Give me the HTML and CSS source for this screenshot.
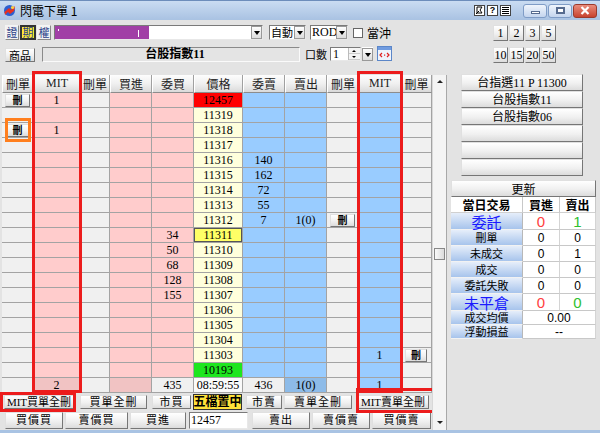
FILE: index.html
```html
<!DOCTYPE html>
<html>
<head>
<meta charset="utf-8">
<title>閃電下單 1</title>
<link rel="stylesheet" href="styles.css">
</head>
<body>
<div class="win">
  <div class="title">
    <svg class="appicon" width="13" height="13" viewBox="0 0 13 13"><circle cx="6.5" cy="6.5" r="5.5" fill="#2d5fd0"/><path d="M1.5 8 L6 4 L8 6 L12 2 L11 7 L7 10 L5 8 L2 11 Z" fill="#e83020"/><circle cx="9.5" cy="3.5" r="1.6" fill="#ffd040"/></svg>
    <span class="ttext">閃電下單 1</span>
    <div class="tools">
      <span class="tool"><svg width="9" height="9" viewBox="0 0 9 9"><path d="M2 1 L7 1 L5 4 L7 7 L2 7 Z M1 8 L4 5" fill="none" stroke="#000" stroke-width="1"/></svg></span>
      <span class="tool q">?</span>
      <span class="tool"><svg width="9" height="9" viewBox="0 0 9 9"><path d="M1 1.5H8M1 3.5H8M1 5.5H8M1 7.5H8" stroke="#000" stroke-width="1"/></svg></span>
    </div>
    <div class="caps">
      <span class="cap"><i class="minbar"></i></span>
      <span class="cap"><i class="maxbox"></i></span>
      <span class="cap close"><svg width="10" height="9" viewBox="0 0 10 9"><path d="M1.5 1L8.5 8M8.5 1L1.5 8" stroke="#fff" stroke-width="2.2"/></svg></span>
    </div>
  </div>

  <div class="tb1">
    <span class="mk">證</span><span class="mk on">期</span><span class="mk">權</span>
    <div class="combo prod"><span class="purple"><i class="dot"></i><i class="cur"></i></span><span class="fill"></span><span class="arr"></span></div>
    <div class="combo auto"><span class="val cjk">自動</span><span class="arr"></span></div>
    <div class="combo rod"><span class="val">ROD</span><span class="arr"></span></div>
    <span class="chk"></span><span class="lbl cjk">當沖</span>
    <div class="nums"><span class="btn nb">1</span><span class="btn nb">2</span><span class="btn nb">3</span><span class="btn nb">5</span></div>
  </div>

  <div class="tb2">
    <span class="btn prodbtn">商品</span>
    <div class="field">台股指數11</div>
    <span class="lbl2 cjk">口數</span>
    <div class="spin"><span class="sval">1</span><span class="sarr"><i class="up"></i><i class="dn"></i></span></div>
    <span class="combo ddonly"><span class="arr"></span></span>
    <svg class="wicon" width="15" height="15" viewBox="0 0 15 15"><rect x="0.5" y="0.5" width="14" height="14" fill="#eef4fc" stroke="#5b86c8"/><rect x="1" y="1" width="13" height="3" fill="#6f9be0"/><path d="M5 7 L3 9 L5 11 M10 7 L12 9 L10 11" fill="none" stroke="#e02020" stroke-width="1.2"/><rect x="7" y="8.5" width="1.2" height="1.2" fill="#e02020"/></svg>
    <div class="nums"><span class="btn nb">10</span><span class="btn nb">15</span><span class="btn nb">20</span><span class="btn nb">50</span></div>
  </div>

  <div class="main">
    <div class="content">
      <div class="thead">
        <div class="cjk">刪單</div><div>MIT</div><div class="cjk">刪單</div><div class="cjk">買進</div><div class="cjk">委買</div><div class="cjk">價格</div><div class="cjk">委賣</div><div class="cjk">賣出</div><div class="cjk">刪單</div><div>MIT</div><div class="cjk">刪單</div>
      </div>
      <div class="tbody">
        <div class="hb"><span class="btn del">刪</span></div><div>1</div><div></div><div></div><div></div><div class="red">12457</div><div></div><div></div><div></div><div></div><div></div>
        <div></div><div></div><div></div><div></div><div></div><div>11319</div><div></div><div></div><div></div><div></div><div></div>
        <div class="hb"><span class="btn del">刪</span></div><div>1</div><div></div><div></div><div></div><div>11318</div><div></div><div></div><div></div><div></div><div></div>
        <div></div><div></div><div></div><div></div><div></div><div>11317</div><div></div><div></div><div></div><div></div><div></div>
        <div></div><div></div><div></div><div></div><div></div><div>11316</div><div>140</div><div></div><div></div><div></div><div></div>
        <div></div><div></div><div></div><div></div><div></div><div>11315</div><div>162</div><div></div><div></div><div></div><div></div>
        <div></div><div></div><div></div><div></div><div></div><div>11314</div><div>72</div><div></div><div></div><div></div><div></div>
        <div></div><div></div><div></div><div></div><div></div><div>11313</div><div>55</div><div></div><div></div><div></div><div></div>
        <div></div><div></div><div></div><div></div><div></div><div>11312</div><div>7</div><div>1(0)</div><div class="hb"><span class="btn del">刪</span></div><div></div><div></div>
        <div></div><div></div><div></div><div></div><div>34</div><div class="hl">11311</div><div></div><div></div><div></div><div></div><div></div>
        <div></div><div></div><div></div><div></div><div>50</div><div>11310</div><div></div><div></div><div></div><div></div><div></div>
        <div></div><div></div><div></div><div></div><div>68</div><div>11309</div><div></div><div></div><div></div><div></div><div></div>
        <div></div><div></div><div></div><div></div><div>128</div><div>11308</div><div></div><div></div><div></div><div></div><div></div>
        <div></div><div></div><div></div><div></div><div>155</div><div>11307</div><div></div><div></div><div></div><div></div><div></div>
        <div></div><div></div><div></div><div></div><div></div><div>11306</div><div></div><div></div><div></div><div></div><div></div>
        <div></div><div></div><div></div><div></div><div></div><div>11305</div><div></div><div></div><div></div><div></div><div></div>
        <div></div><div></div><div></div><div></div><div></div><div>11304</div><div></div><div></div><div></div><div></div><div></div>
        <div></div><div></div><div></div><div></div><div></div><div>11303</div><div></div><div></div><div></div><div>1</div><div class="hb"><span class="btn del sm">刪</span></div>
        <div></div><div></div><div></div><div></div><div></div><div class="grn">10193</div><div></div><div></div><div></div><div></div><div></div>
        <div></div><div class="sp">2</div><div></div><div class="sp"></div><div class="sg">435</div><div class="sw">08:59:55</div><div class="sg">436</div><div class="sb">1(0)</div><div></div><div>1</div><div></div>
      </div>
      <div class="brow1">
        <span class="btn b1">MIT買單全刪</span>
        <span class="btn b2">買單全刪</span>
        <span class="btn b3">市買</span>
        <span class="btn b4">五檔置中</span>
        <span class="btn b5">市賣</span>
        <span class="btn b6">賣單全刪</span>
        <span class="btn b7">MIT賣單全刪</span>
      </div>
      <div class="brow2">
        <span class="btn c1">買價買</span>
        <span class="btn c2">賣價買</span>
        <span class="btn c3">買進</span>
        <span class="pin">12457</span>
        <span class="btn c5">賣出</span>
        <span class="btn c6">賣價賣</span>
        <span class="btn c7">買價賣</span>
      </div>
      <div class="rbox mitb"></div>
      <div class="rbox mits"></div>
      <div class="rbox allb"></div>
      <div class="rbox alls"></div>
      <div class="obox"></div>
    </div>
    <div class="vscroll">
      <span class="sup"></span>
      <span class="thumb"></span>
      <span class="sdn"></span>
    </div>
    <div class="side">
      <div class="list">
        <span class="btn lb">台指選11 P 11300</span>
        <span class="btn lb">台股指數11</span>
        <span class="btn lb">台股指數06</span>
        <span class="btn lb"></span>
        <span class="btn lb"></span>
        <span class="btn lb"></span>
      </div>
      <span class="btn refresh">更新</span>
      <div class="stats">
        <div class="sh">當日交易</div><div class="sh">買進</div><div class="sh">賣出</div>
        <div class="lab big">委託</div><div class="v bigv r">0</div><div class="v bigv g">1</div>
        <div class="lab">刪單</div><div class="v">0</div><div class="v">0</div>
        <div class="lab">未成交</div><div class="v">0</div><div class="v">1</div>
        <div class="lab">成交</div><div class="v">0</div><div class="v">0</div>
        <div class="lab">委託失敗</div><div class="v">0</div><div class="v">0</div>
        <div class="lab big">未平倉</div><div class="v bigv r">0</div><div class="v bigv g">0</div>
        <div class="lab">成交均價</div><div class="v span">0.00</div>
        <div class="lab">浮動損益</div><div class="v span">--</div>
      </div>
    </div>
  </div>
</div>
</body>
</html>
```

FILE: styles.css
```css
* { box-sizing: border-box; margin: 0; padding: 0; }
html, body { width: 600px; height: 433px; overflow: hidden; }
body {
  background: #e3e3e3;
  font-family: "Liberation Serif", "Noto Sans CJK TC", serif;
  font-size: 12px;
  color: #000;
}
.cjk { font-family: "Noto Sans CJK TC", sans-serif; }

.win {
  width: 600px;
  height: 433px;
  display: flex;
  flex-direction: column;
  border-bottom: 3px solid #a9c3e3;
}

/* title bar */
.title {
  height: 20px;
  flex: none;
  display: flex;
  align-items: center;
  background: linear-gradient(#cadcf2, #a9c2e2);
  border-top: 1px solid #6d8dbb;
}
.appicon { margin-left: 3px; }
.ttext { margin-left: 4px; font-family: "Noto Sans CJK TC", sans-serif; font-size: 12px; line-height: 14px; }
.tools { margin-left: auto; display: flex; gap: 2px; }
.tool {
  width: 11px; height: 11px;
  background: #fff;
  border: 1px solid #444;
  display: flex; align-items: center; justify-content: center;
  font-family: "Liberation Sans", sans-serif;
  font-size: 9px; font-weight: bold; line-height: 9px;
}
.caps { margin-left: 12px; margin-right: 3px; display: flex; gap: 1px; }
.cap {
  width: 24px; height: 14px;
  border: 1px solid #7f9cc6;
  border-radius: 3px;
  background: linear-gradient(#f0f5fc, #c4d5ee);
  display: flex; align-items: center; justify-content: center;
}
.cap.close { background: linear-gradient(#e98c7c, #c8432f); border-color: #9b3a2c; }
.minbar { display: block; width: 9px; height: 3px; background: #fff; border: 1px solid #566b8f; margin-top: 3px; }
.maxbox { display: block; width: 9px; height: 7px; border: 2px solid #566b8f; background: #fff; }

/* toolbar 1 */
.tb1 {
  height: 25px;
  flex: none;
  display: flex;
  align-items: center;
  padding-left: 5px;
}
.mk {
  width: 14px; height: 15px;
  margin-right: 1px;
  border: 1px solid #8a8a8a;
  border-top-color: #f4f4f4; border-left-color: #f4f4f4;
  background: #f2f2f2;
  color: #2a3f8a;
  font-family: "Noto Sans CJK TC", sans-serif;
  font-size: 11px; line-height: 13px;
  text-align: center;
}
.mk.on { width: 16px; background: #ffec30; border: 2px solid #333; line-height: 11px; }
.combo {
  height: 15px;
  display: flex;
  align-items: center;
  border: 1px solid #7a7a7a;
  border-right-color: #e8e8e8; border-bottom-color: #e8e8e8;
  background: #fff;
}
.prod { width: 209px; margin-left: 2px; align-items: stretch; }
.purple { width: 94px; background: #a13fa6; position: relative; }
.purple .dot { position: absolute; left: 3px; top: 3px; width: 1px; height: 2px; background: #fff; }
.purple .cur { position: absolute; left: 83px; top: 4px; width: 1px; height: 7px; background: #fff; }
.fill { flex: 1; background: #fff; }
.arr {
  width: 11px;
  height: 13px;
  flex: none;
  background: linear-gradient(#fefefe, #dcdcdc);
  border: 1px solid #999;
  position: relative;
}
.prod .arr { height: auto; }
.arr::after {
  content: "";
  position: absolute;
  left: 2px; top: 4px;
  border-left: 3px solid transparent;
  border-right: 3px solid transparent;
  border-top: 4px solid #000;
}
.auto { width: 37px; margin-left: 6px; }
.rod { width: 38px; margin-left: 4px; }
.val { flex: 1; min-width: 0; font-size: 12px; line-height: 13px; padding-left: 1px; white-space: nowrap; }
.auto .val { font-size: 11px; }
.chk { width: 10px; height: 10px; margin-left: 5px; background: #fff; border: 1px solid #666; }
.lbl { margin-left: 4px; font-size: 12px; line-height: 14px; }
.nums { margin-left: auto; margin-right: 44px; display: flex; gap: 1px; }
.nb { width: 15px; height: 16px; font-size: 12px; }

/* generic button */
.btn {
  display: flex;
  align-items: center;
  justify-content: center;
  background: linear-gradient(#ffffff, #f0f0f0 55%, #dcdcdc);
  border: 1px solid #767676;
  border-top-color: #e0e0e0;
  border-left-color: #e0e0e0;
  font-family: "Liberation Serif", "Noto Sans CJK TC", serif;
  font-size: 12px;
  line-height: 12px;
  white-space: nowrap;
}

/* toolbar 2 */
.tb2 {
  height: 26px;
  flex: none;
  display: flex;
  align-items: flex-start;
  padding: 2px 0 0 5px;
}
.prodbtn { width: 30px; height: 14px; margin-top: 1px; font-family: "Noto Sans CJK TC", sans-serif; font-size: 11px; }
.field {
  width: 258px; height: 15px;
  margin-left: 7px;
  border: 1px solid #8a8a8a;
  border-right-color: #fafafa; border-bottom-color: #fafafa;
  background: #e4e4e4;
  text-align: center;
  font-weight: bold;
  font-size: 12px;
  line-height: 13px;
  padding-left: 8px;
}
.lbl2 { margin-left: 5px; font-size: 11px; line-height: 15px; }
.spin {
  width: 31px; height: 14px; margin-left: 3px;
  display: flex;
  background: #fff;
  border: 1px solid #7a7a7a;
  border-right-color: #e8e8e8; border-bottom-color: #e8e8e8;
}
.sval { flex: 1; font-size: 12px; line-height: 12px; padding-left: 2px; }
.sarr { width: 12px; display: flex; flex-direction: column; border-left: 1px solid #bbb; }
.sarr i { flex: 1; position: relative; border-bottom: 1px solid #ccc; background: #f4f4f4; }
.sarr i::after { content: ""; position: absolute; left: 3px; border-left: 2px solid transparent; border-right: 2px solid transparent; }
.sarr .up::after { top: 2px; border-bottom: 2px solid #000; }
.sarr .dn::after { top: 2px; border-top: 2px solid #000; }
.ddonly { width: 11px; height: 14px; margin-left: 1px; border: none; }
.wicon { margin-left: 4px; margin-top: -1px; }

/* main */
.main { flex: 1; display: flex; min-height: 0; }
.content {
  width: 430px;
  margin-left: 2px;
  padding-top: 4px;
  position: relative;
  flex: none;
}
.thead, .tbody {
  display: grid;
  grid-template-columns: 32px 46px 30px 42px 42px 49px 42px 42px 32px 42px 31px;
}
.thead { grid-template-rows: 18px; }
.thead > div {
  background: linear-gradient(#fdfdfd, #f0f0f0 50%, #dadada);
  border-right: 1px solid #a0a0a0;
  border-bottom: 1px solid #8c8c8c;
  border-left: 1px solid #fff;
  text-align: center;
  font-size: 12px;
  line-height: 17px;
  color: #222;
}
.tbody { grid-template-rows: repeat(20, 15px); }
.tbody > div {
  border-right: 1px solid #a3a3a3;
  border-bottom: 1px solid #a3a3a3;
  text-align: center;
  font-size: 12px;
  line-height: 14px;
  overflow: hidden;
}
.tbody > div:nth-child(11n+1),
.tbody > div:nth-child(11n+3),
.tbody > div:nth-child(11n+9),
.tbody > div:nth-child(11n+11) { background: #f0f0f0; }
.tbody > div:nth-child(11n+2),
.tbody > div:nth-child(11n+4),
.tbody > div:nth-child(11n+5) { background: #ffcccc; }
.tbody > div:nth-child(11n+6) { background: #ffffdc; }
.tbody > div:nth-child(11n+7),
.tbody > div:nth-child(11n+8),
.tbody > div:nth-child(11n+10) { background: #99ccff; }
.tbody > div.red { background: #ff0000; }
.tbody > div.hl { background: #ffff66; box-shadow: inset 0 0 0 1px #555; }
.tbody > div.grn { background: #1ee61e; }
.tbody > div.sp { background: #f1c3c3; }
.tbody > div.sg { background: #f0f0f0; }
.tbody > div.sw { background: #fafafa; }
.tbody > div.sb { background: #8dbbe8; }
.tbody > div.hb { display: flex; align-items: center; justify-content: center; }
.del {
  width: 25px; height: 13px;
  font-family: "Noto Sans CJK TC", sans-serif;
  font-size: 10px;
  line-height: 10px;
  font-weight: bold;
}
.del.sm { width: 22px; }

/* bottom rows */
.brow1 { height: 18px; display: flex; align-items: center; }
.brow1 .btn { height: 14px; font-size: 11px; line-height: 11px; font-family: "Liberation Serif", "Noto Sans CJK TC", serif; }
.b1 { width: 70px; margin-left: 2px; }
.b2 { width: 67px; margin-left: 6px; letter-spacing: 1px; }
.b3 { width: 39px; margin-left: 5px; letter-spacing: 1px; }
.brow1 .b4 {
  width: 49px; height: 16px; margin-left: 2px;
  background: #ffe23a;
  border: 1px solid #333;
  font-size: 12px;
  font-weight: bold;
}
.b5 { width: 36px; margin-left: 4px; letter-spacing: 1px; }
.b6 { width: 68px; margin-left: 2px; letter-spacing: 1px; }
.b7 { width: 72px; margin-left: 5px; }
.brow2 { height: 19px; display: flex; align-items: flex-start; padding-top: 1px; }
.brow2 .btn { height: 17px; font-size: 11px; line-height: 11px; letter-spacing: 1px; }
.c1 { width: 58px; margin-left: 3px; }
.c2 { width: 63px; margin-left: 2px; }
.c3 { width: 56px; margin-left: 2px; }
.pin {
  width: 59px; height: 17px; margin-left: 3px;
  background: #fff;
  border: 1px solid #7a7a7a;
  border-right-color: #e8e8e8; border-bottom-color: #e8e8e8;
  font-size: 12px; line-height: 15px; padding-left: 1px;
}
.c5 { width: 58px; margin-left: 4px; }
.c6 { width: 58px; margin-left: 2px; }
.c7 { width: 59px; margin-left: 2px; }

/* annotation overlays */
.rbox { position: absolute; border: 3px solid #ec1c1c; pointer-events: none; }
.mitb { left: 30px; top: 0; width: 50px; height: 322px; }
.mits { left: 355px; top: 0; width: 46px; height: 322px; }
.allb { left: -2px; top: 321px; width: 76px; height: 20px; }
.alls { left: 354px; top: 317px; width: 80px; height: 25px; }
.obox { position: absolute; left: 3px; top: 47px; width: 26px; height: 24px; border: 3px solid #ff7f1e; pointer-events: none; }

/* scrollbar */
.vscroll {
  width: 15px;
  margin-top: 4px;
  flex: none;
  position: relative;
  background: #f4f4f4;
  border-left: 1px solid #d8d8d8;
  border-right: 1px solid #a8a8a8;
}
.sup, .sdn { position: absolute; left: 4px; border-left: 3px solid transparent; border-right: 3px solid transparent; }
.sup { top: 5px; border-bottom: 3px solid #222; }
.sdn { bottom: 6px; border-top: 3px solid #222; }
.thumb {
  position: absolute;
  left: 1px; top: 173px;
  width: 11px; height: 12px;
  background: linear-gradient(90deg, #fafafa, #dcdcdc);
  border: 1px solid #888;
}

/* side panel */
.side { width: 145px; margin-left: 4px; padding-top: 3px; flex: none; }
.list { display: flex; flex-direction: column; padding-left: 10px; }
.lb { width: 122px; height: 17px; font-family: "Liberation Serif", "Noto Sans CJK TC", serif; font-size: 12px; }
.refresh { width: 145px; height: 17px; margin-top: 4px; font-family: "Noto Sans CJK TC", sans-serif; }
.stats {
  display: grid;
  grid-template-columns: 72px 37px 36px;
  grid-template-rows: 16px 17px 16px 16px 16px 16px 17px 14px 14px;
  background: #fff;
  border-right: 1px solid #b0b0b0;
}
.stats > div {
  font-size: 12px;
  white-space: nowrap;
  display: flex;
  align-items: center;
  justify-content: center;
}
.sh {
  background: #fff;
  font-family: "Noto Sans CJK TC", sans-serif;
  font-weight: bold;
  line-height: 12px;
  border-right: 1px solid #c8c8c8;
  border-bottom: 1px solid #d0d0d0;
}
.stats > .lab {
  background: linear-gradient(#e6eefa, #a7c4ec);
  border-bottom: 1px solid #f2f2f2;
  border-right: 1px solid #b8b8b8;
  font-family: "Noto Sans CJK TC", sans-serif;
  font-size: 11px;
  line-height: 11px;
}
.stats > .lab.big { color: #1a1aff; font-size: 15px; line-height: 15px; }
.v {
  background: #fff;
  font-family: "Liberation Sans", sans-serif;
  line-height: 12px;
  border-bottom: 1px solid #c8c8c8;
  border-right: 1px solid #d4d4d4;
}
.stats > .v.bigv { font-size: 15px; line-height: 15px; }
.v.r { color: #ff4040; }
.v.g { color: #30c030; }
.stats > .v.span { grid-column: span 2; }
```
